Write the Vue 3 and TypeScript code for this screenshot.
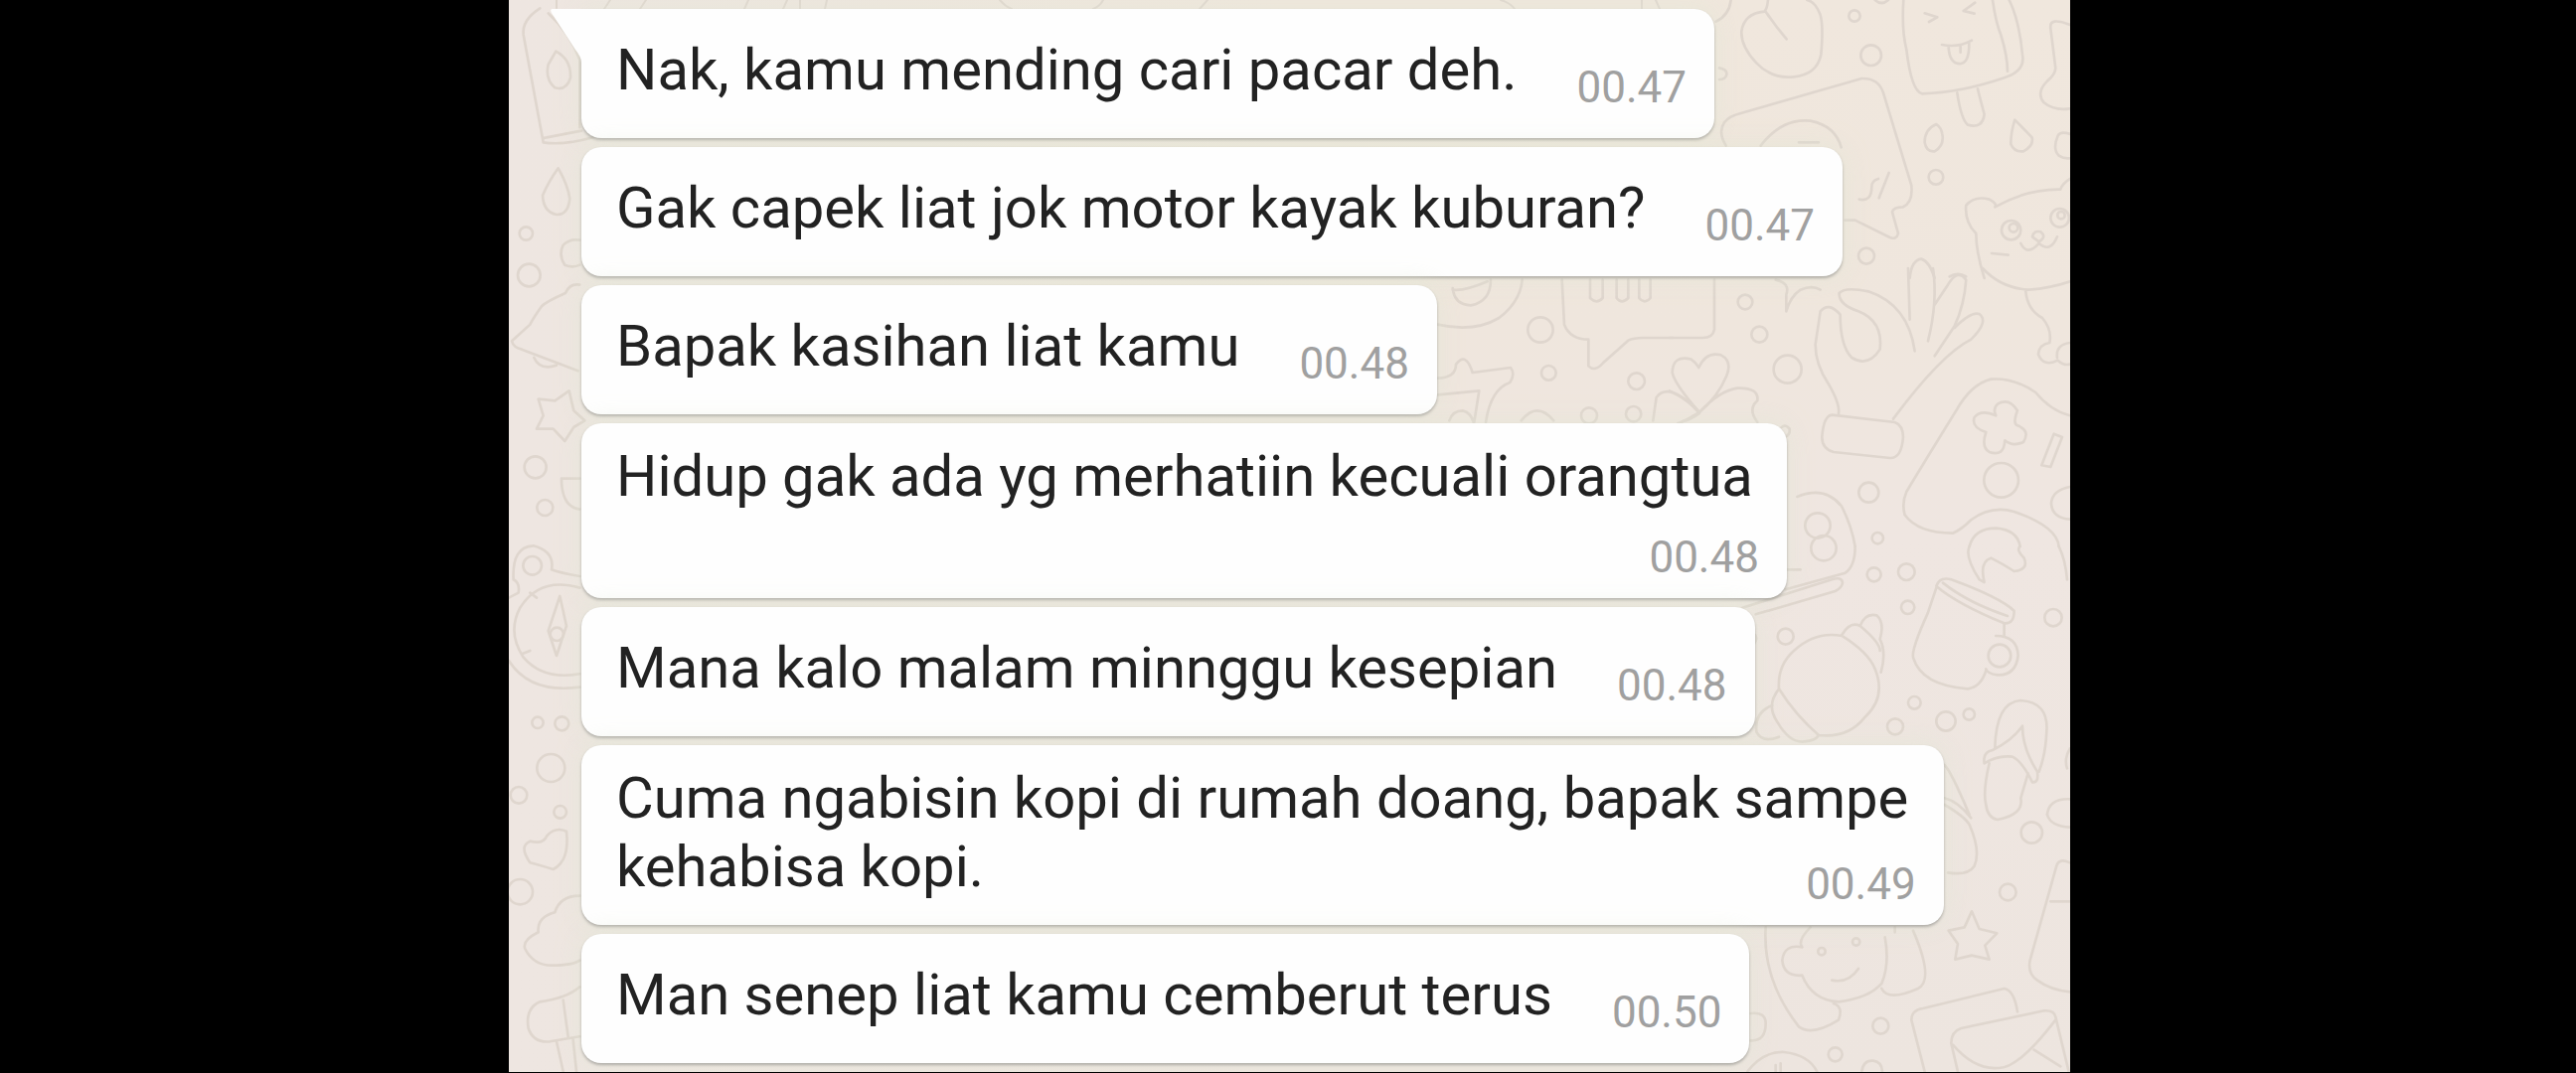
<script setup lang="ts">
interface Message {
  text: string
  time: string
  layout: 'inline' | 'stacked' | 'wrapped'
  tail?: boolean
}

const messages: Message[] = [
  { text: 'Nak, kamu mending cari pacar deh.', time: '00.47', layout: 'inline', tail: true },
  { text: 'Gak capek liat jok motor kayak kuburan?', time: '00.47', layout: 'inline' },
  { text: 'Bapak kasihan liat kamu', time: '00.48', layout: 'inline' },
  { text: 'Hidup gak ada yg merhatiin kecuali orangtua', time: '00.48', layout: 'stacked' },
  { text: 'Mana kalo malam minnggu kesepian', time: '00.48', layout: 'inline' },
  { text: 'Cuma ngabisin kopi di rumah doang, bapak sampe kehabisa kopi.', time: '00.49', layout: 'wrapped' },
  { text: 'Man senep liat kamu cemberut terus', time: '00.50', layout: 'inline' },
]
</script>

<template>
  <div class="page">
    <main class="chat">
      <svg class="wallpaper" viewBox="512 0 1571 1079" preserveAspectRatio="xMidYMin slice" aria-hidden="true">
        <!-- strip above the first bubble -->
        <g transform="translate(540 0)">
          <path d="M20 0v8M74 0l-6 9M110 0l-6 9M213 0l-4 9M252 0l-4 9M265 0v9M292 0l-2 9M466 0q5 6 12 9M570 0q-3 6-10 9M675 0l-8 9M970 0q10 3 14 9M1112 0v9M1126 0l4 9" />
        </g>

        <!-- top right: sweets, card, ice lolly, bear -->
        <g transform="translate(1680 0) scale(.3333)">
          <path d="M185 0Q180 45 140 65M150 205Q175 210 172 225T150 240" />
          <path d="M297 0Q295 25 286 35Q225 40 217 95Q215 140 262 190Q310 240 375 232Q445 225 457 165Q465 80 455 45Q440 5 415 0M290 35Q320 80 353 118" />
          <circle cx="558" cy="48" r="17" /><circle cx="608" cy="167" r="31" />
          <path d="M620 0q20 18 40 0" />
          <path d="M706 0Q700 90 715 150Q730 275 762 283Q880 280 1010 235Q1075 215 1065 165Q1055 60 1025 0M975 0Q985 70 1000 105Q1020 170 1020 215" />
          <path d="M770 40l38 12l-25 14M922 8l-35 25l33 8M822 135Q870 145 912 122M842 142Q845 195 880 192Q905 188 904 130M878 140v18" />
          <path d="M868 280Q880 360 900 377Q945 390 950 345Q935 290 930 268" />
          <path d="M1209 75Q1145 50 1150 85L1165 205Q1165 225 1140 245Q1105 280 1130 310Q1160 335 1209 328" />
          <path d="M805 375Q770 390 770 430Q775 460 800 457Q830 440 823 405Q820 385 805 375ZM1042 362Q1030 400 1030 435Q1040 460 1068 457Q1100 440 1094 415Q1075 395 1042 362ZM1209 405Q1180 395 1172 410Q1155 450 1175 470Q1190 480 1209 478" />
          <circle cx="804" cy="535" r="22" />
          <path d="M170 440Q145 400 165 370Q180 350 215 342L580 237Q630 235 645 280L730 560Q735 610 705 625Q675 625 672 640L690 705Q685 725 665 717L560 665H530M275 440Q340 355 425 365Q500 380 518 445M390 430h60" />
          <path d="M572 602Q610 610 610 565Q610 545 630 540M662 522L632 598" />
          <circle cx="594" cy="773" r="24" />
          <path d="M725 840Q730 785 760 782Q785 790 800 840M845 835q25-15 50 0" />
          <path d="M950 840Q925 760 925 705Q890 670 895 620Q920 590 965 602Q990 615 982 625Q1080 570 1180 572Q1185 555 1209 540" />
          <circle cx="1031" cy="695" r="29" /><circle cx="1038" cy="688" r="13" />
          <circle cx="1178" cy="658" r="28" /><circle cx="1182" cy="650" r="11" />
          <path d="M1095 715Q1100 695 1120 700Q1140 715 1115 730ZM1060 735Q1080 775 1115 735Q1150 765 1170 715M972 765L1022 770" />
        </g>

        <!-- right: hand, game controller -->
        <g transform="translate(1680 270) scale(.3333)">
          <path d="M135 35V185Q130 210 100 210H0M320 35Q365 45 352 80V130Q365 85 395 65Q430 50 455 65" />
          <circle cx="228" cy="102" r="22" /><circle cx="271" cy="200" r="24" /><circle cx="356" cy="305" r="42" />
          <path d="M90 435Q15 350 8 315Q10 260 65 275Q80 285 88 300Q110 250 155 262Q190 280 172 325Q145 390 90 435ZM0 370Q60 400 90 435Q40 465 25 468M90 435Q150 370 205 362Q270 360 265 400Q235 425 265 465M345 510Q365 505 362 485Q350 470 338 480" />
          <path d="M510 440Q515 410 480 350Q440 290 440 230L455 130Q480 100 515 140Q515 235 550 270Q600 300 635 245Q645 160 570 130Q510 110 512 75Q530 55 600 70Q720 110 740 250" />
          <path d="M720 0L725 155M795 0Q810 100 780 220M800 110L840 50Q870 0 895 35Q890 110 860 175L800 265M860 180Q910 130 935 138Q965 160 910 215Q820 260 675 455" />
          <path d="M490 443L680 465Q705 475 705 510Q700 575 665 573L495 555Q460 545 460 510Q465 445 490 443Z" />
          <path d="M945 0Q1000 60 1085 65Q1150 60 1209 40M1075 70Q1080 125 1125 150Q1155 185 1147 225Q1115 230 1113 260Q1130 300 1172 278Q1190 295 1209 290M1209 225Q1165 230 1170 270" />
          <path d="M1209 445Q1150 430 1105 375Q1040 330 970 335Q910 350 865 430Q760 600 715 675Q700 710 710 745Q750 800 855 800Q880 790 910 760Q970 715 1040 735Q1170 780 1175 840" />
          <path d="M990 410Q1025 390 1050 430Q1035 470 1050 475Q1090 490 1068 525Q1035 540 1012 520Q1010 570 965 555Q940 540 955 495Q910 480 920 450Q940 425 985 445Q975 425 990 410Z" />
          <circle cx="1001" cy="640" r="52" />
          <path d="M1160 500L1185 510L1150 600L1123 595ZM1209 660Q1155 670 1152 710Q1155 755 1209 758M905 840Q920 785 985 785Q1050 790 1058 840" />
          <circle cx="601" cy="677" r="30" /><circle cx="628" cy="815" r="17" />
          <path d="M385 690Q470 655 520 720Q550 780 560 840" /><circle cx="447" cy="777" r="38" />
        </g>

        <!-- right: brush, shell, mug, flip-flop -->
        <g transform="translate(1680 540) scale(.3333)">
          <path d="M560 30Q560 90 530 110L350 160M350 100H395M220 215L490 130Q520 120 522 140Q520 155 500 165L260 235" />
          <circle cx="465" cy="35" r="38" /><circle cx="617" cy="115" r="21" /><circle cx="715" cy="107" r="25" /><circle cx="719" cy="214" r="20" />
          <path d="M905 30Q890 60 935 130L950 138Q935 75 970 65Q1010 85 1040 105Q1085 100 1070 65Q1045 40 1058 30M1175 30Q1195 70 1200 130" />
          <path d="M805 150Q815 120 850 130Q1000 185 1040 225Q1040 265 1010 262Q870 205 805 150ZM825 140Q900 200 1020 240M805 155L780 230Q730 340 735 365Q760 450 900 460Q940 455 955 405M1010 262V298" />
          <circle cx="996" cy="360" r="34" /><path d="M985 300Q1050 300 1052 360Q1045 420 990 418Q960 415 955 400" />
          <circle cx="1158" cy="245" r="26" /><circle cx="350" cy="302" r="24" />
          <path d="M250 290q20 15 5 35" />
          <path d="M330 460Q325 390 375 345Q440 285 520 300Q600 350 620 400Q655 485 590 545Q540 610 450 600Q380 540 330 460ZM520 297Q545 255 575 270Q590 230 625 238Q650 260 635 310Q655 350 638 410M575 270Q635 320 635 345M330 460Q290 510 325 560Q360 620 400 620Q450 615 448 598M310 510Q255 530 262 590Q280 625 330 605" />
          <circle cx="739" cy="502" r="19" /><circle cx="681" cy="574" r="24" /><circle cx="834" cy="558" r="29" /><circle cx="904" cy="537" r="17" />
          <path d="M950 685Q945 650 975 645Q1035 615 1065 572Q1065 640 1110 710Q1115 745 1095 742Q1065 680 1035 665Q990 660 950 685ZM982 640Q985 500 1060 495Q1145 500 1138 590Q1135 660 1115 710M965 685Q945 770 955 810Q960 850 990 855Q1070 840 1060 790L1082 715" />
          <path d="M830 690Q850 710 905 840M830 790Q870 800 910 850M1209 640Q1190 670 1200 700M1209 793Q1145 790 1140 840" />
        </g>

        <!-- bottom right: girl, star, envelopes -->
        <g transform="translate(1680 800) scale(.3333)">
          <path d="M830 30Q890 65 905 90Q940 170 920 215Q900 245 840 235M1140 60Q1150 95 1209 98" />
          <circle cx="1093" cy="114" r="32" /><circle cx="1021" cy="294" r="25" />
          <path d="M1209 205Q1175 190 1168 215L1088 500Q1080 540 1110 560Q1150 590 1209 595M1150 322H1209" />
          <path d="M912 352L935 405L988 418L952 455L965 497L912 485L862 497L870 450L842 410L890 400Z" />
          <path d="M290 400Q280 560 390 700Q430 730 510 680Q525 640 495 630M425 400Q385 440 400 460Q345 450 340 500Q345 550 400 545Q430 620 510 625Q600 615 640 570Q665 510 650 430M735 410Q800 560 750 585Q660 625 640 585M680 400v15M490 560Q540 570 570 525" />
          <circle cx="459" cy="473" r="11" /><circle cx="563" cy="444" r="11" />
          <circle cx="637" cy="698" r="24" /><circle cx="500" cy="784" r="21" /><path d="M580 835q5-35 35-32q25 3 27 32M245 660Q290 655 290 690Q290 745 245 742" />
          <path d="M770 836L730 680Q730 650 765 645L1010 585Q1040 590 1050 655M870 836L850 750Q850 715 880 705L1130 652Q1160 650 1165 670L1205 836M855 755Q920 830 990 825Q1050 830 1165 680M1100 770L1180 820" />
          <path d="M235 836Q280 775 345 777Q420 785 445 836M320 836v-20M335 836v-25" />
        </g>

        <!-- middle gap beside the third bubble -->
        <g transform="translate(1400 260) scale(.3333)">
          <path d="M395 65Q390 130 325 180Q250 225 140 200M185 90Q190 140 240 142Q300 130 300 65M185 95Q220 100 290 70" />
          <circle cx="450" cy="216" r="38" /><circle cx="475" cy="346" r="22" /><circle cx="740" cy="371" r="25" /><circle cx="597" cy="475" r="24" /><circle cx="731" cy="470" r="23" />
          <path d="M515 65L522 200Q540 245 595 245V325Q615 345 640 315L715 248Q730 240 760 240H850M600 65V120Q620 140 638 120V65M680 65V120Q695 140 715 120V65M748 65V120Q765 140 782 120V65" />
          <path d="M140 362Q195 360 195 320Q225 280 245 345L360 330Q375 350 358 375Q300 395 285 495M140 412L265 400L250 495M175 490Q185 460 215 460Q240 465 248 495M392 490Q440 430 490 490" />
          <path d="M790 490L800 420Q815 400 840 403Q880 410 930 468Q900 490 880 492" />
        </g>

        <!-- left edge, upper part -->
        <g transform="translate(500 0) scale(.3333)">
          <path d="M130 25Q75 60 80 105L140 430Q200 440 290 415M140 430Q135 415 150 415L255 395M250 385V180Q220 100 155 40" />
          <path d="M178 155Q225 180 222 235Q210 275 175 265Q145 240 155 195ZM185 508Q215 560 220 600Q215 650 180 648Q140 640 138 590Q155 550 185 508ZM250 725Q220 720 200 740Q185 770 205 800Q230 810 250 800" />
          <circle cx="88" cy="705" r="20" /><circle cx="97" cy="831" r="34" />
          <path d="M250 860Q220 855 207 885Q150 910 135 925Q110 960 100 980L45 1030Q50 1050 75 1055L245 1120M112 1080Q130 1120 180 1103" />
        </g>

        <!-- left edge, middle part: star, compass -->
        <g transform="translate(500 370) scale(.3333)">
          <path d="M218 70L232 130L265 160L232 180L205 222L170 185L120 185L140 145L125 95L175 100Z" />
          <circle cx="116" cy="301" r="33" /><circle cx="145" cy="423" r="24" />
          <path d="M250 335H195Q195 420 250 428" />
          <circle cx="107" cy="598" r="28" />
          <path d="M50 640Q45 540 110 538Q175 555 165 610Q190 620 250 630M50 640Q70 650 65 680L36 695M250 665Q130 630 70 725Q30 800 80 875Q140 945 250 925M36 885Q100 985 250 965M190 690L210 780L180 870L155 795ZM75 865L100 855M100 680L120 695" />
          <circle cx="181" cy="805" r="20" />
        </g>

        <!-- left edge, lower part: hearts, cupcake -->
        <g transform="translate(500 720) scale(.3333)">
          <circle cx="123" cy="22" r="17" /><circle cx="196" cy="25" r="21" /><circle cx="163" cy="159" r="42" /><circle cx="66" cy="241" r="25" /><circle cx="191" cy="292" r="19" /><circle cx="70" cy="533" r="38" />
          <path d="M100 380Q140 390 150 365Q175 335 210 350Q220 440 170 465Q120 450 100 445Q65 395 100 380Z" />
          <path d="M250 545Q190 545 175 595Q120 610 125 655Q75 680 85 705Q110 755 165 755Q230 755 250 740M250 820Q210 855 130 865Q85 885 95 945Q110 990 160 985L250 970M200 860L215 970M180 985L200 1075M230 980L240 1075" />
        </g>
      </svg>

      <ol class="messages">
        <li v-for="(m, i) in messages" :key="i" class="bubble" :class="m.layout">
          <svg v-if="m.tail" class="tail" viewBox="0 0 32 54" aria-hidden="true">
            <path d="M32 0H2Q-1 0 1 4L25 41Q31 48 31 54H32Z" />
          </svg>
          <p class="text">{{ m.text }}</p>
          <time class="time">{{ m.time }}</time>
        </li>
      </ol>
    </main>
  </div>
</template>

<style>
body {
  margin: 0;
  background: #000;
}
</style>

<style scoped>
.page {
  display: grid;
  grid-template-columns: 512fr 1571fr 509fr;
  min-height: calc(100vh - 1px);
  background: #000;
  font-family: Roboto, 'Noto Sans', sans-serif;
}

.chat {
  grid-column: 2;
  position: relative;
  overflow: hidden;
  min-width: 0;
  background:
    linear-gradient(90deg, #eee6e1 0, rgba(238, 230, 225, 0) 50%),
    linear-gradient(180deg, #f0e7dd 0, #efe6dd 30%, #efe6e1 50%, #ede5df 100%);
}

.wallpaper {
  position: absolute;
  inset: 0;
  width: 100%;
  height: 100%;
  fill: none;
  stroke: #dfd6ce;
  stroke-width: 8;
  stroke-linecap: round;
  stroke-linejoin: round;
}

.wallpaper > g:first-child {
  stroke-width: 2;
}

.messages {
  position: relative;
  display: flex;
  flex-direction: column;
  align-items: flex-start;
  gap: 9px;
  margin: 0;
  padding: 9px 0 7px 73px;
  list-style: none;
}

.bubble {
  position: relative;
  display: grid;
  box-sizing: border-box;
  max-width: 91.5%;
  padding: 27px 28px 25px 35px;
  border-radius: 20px;
  background: #fefefe;
  box-shadow: 0 2px 3px rgba(90, 90, 90, 0.4), 0 0 24px rgba(225, 232, 212, 0.6);
}

.bubble:first-child {
  border-top-left-radius: 0;
}

.inline {
  grid-template-columns: auto auto;
  column-gap: 60px;
}

.stacked,
.wrapped {
  padding-top: 19px;
  padding-bottom: 15px;
}

.stacked {
  row-gap: 12px;
}

.text {
  margin: 0;
  padding-bottom: 9px;
  color: #222;
  font-size: 58px;
  line-height: 69px;
}

.stacked .text {
  padding-right: 6px;
}

.time {
  align-self: end;
  justify-self: end;
  color: #a0a0a0;
  font-size: 44px;
  line-height: 52px;
}

/* the time floats beside the last line of a text that wraps */
.wrapped {
  display: flow-root;
}

.wrapped .text {
  display: inline;
}

.wrapped .time {
  float: right;
  margin-top: 26px;
}

.tail {
  position: absolute;
  top: 0;
  left: -31px;
  width: 32px;
  height: 54px;
  fill: #fefefe;
}
</style>
